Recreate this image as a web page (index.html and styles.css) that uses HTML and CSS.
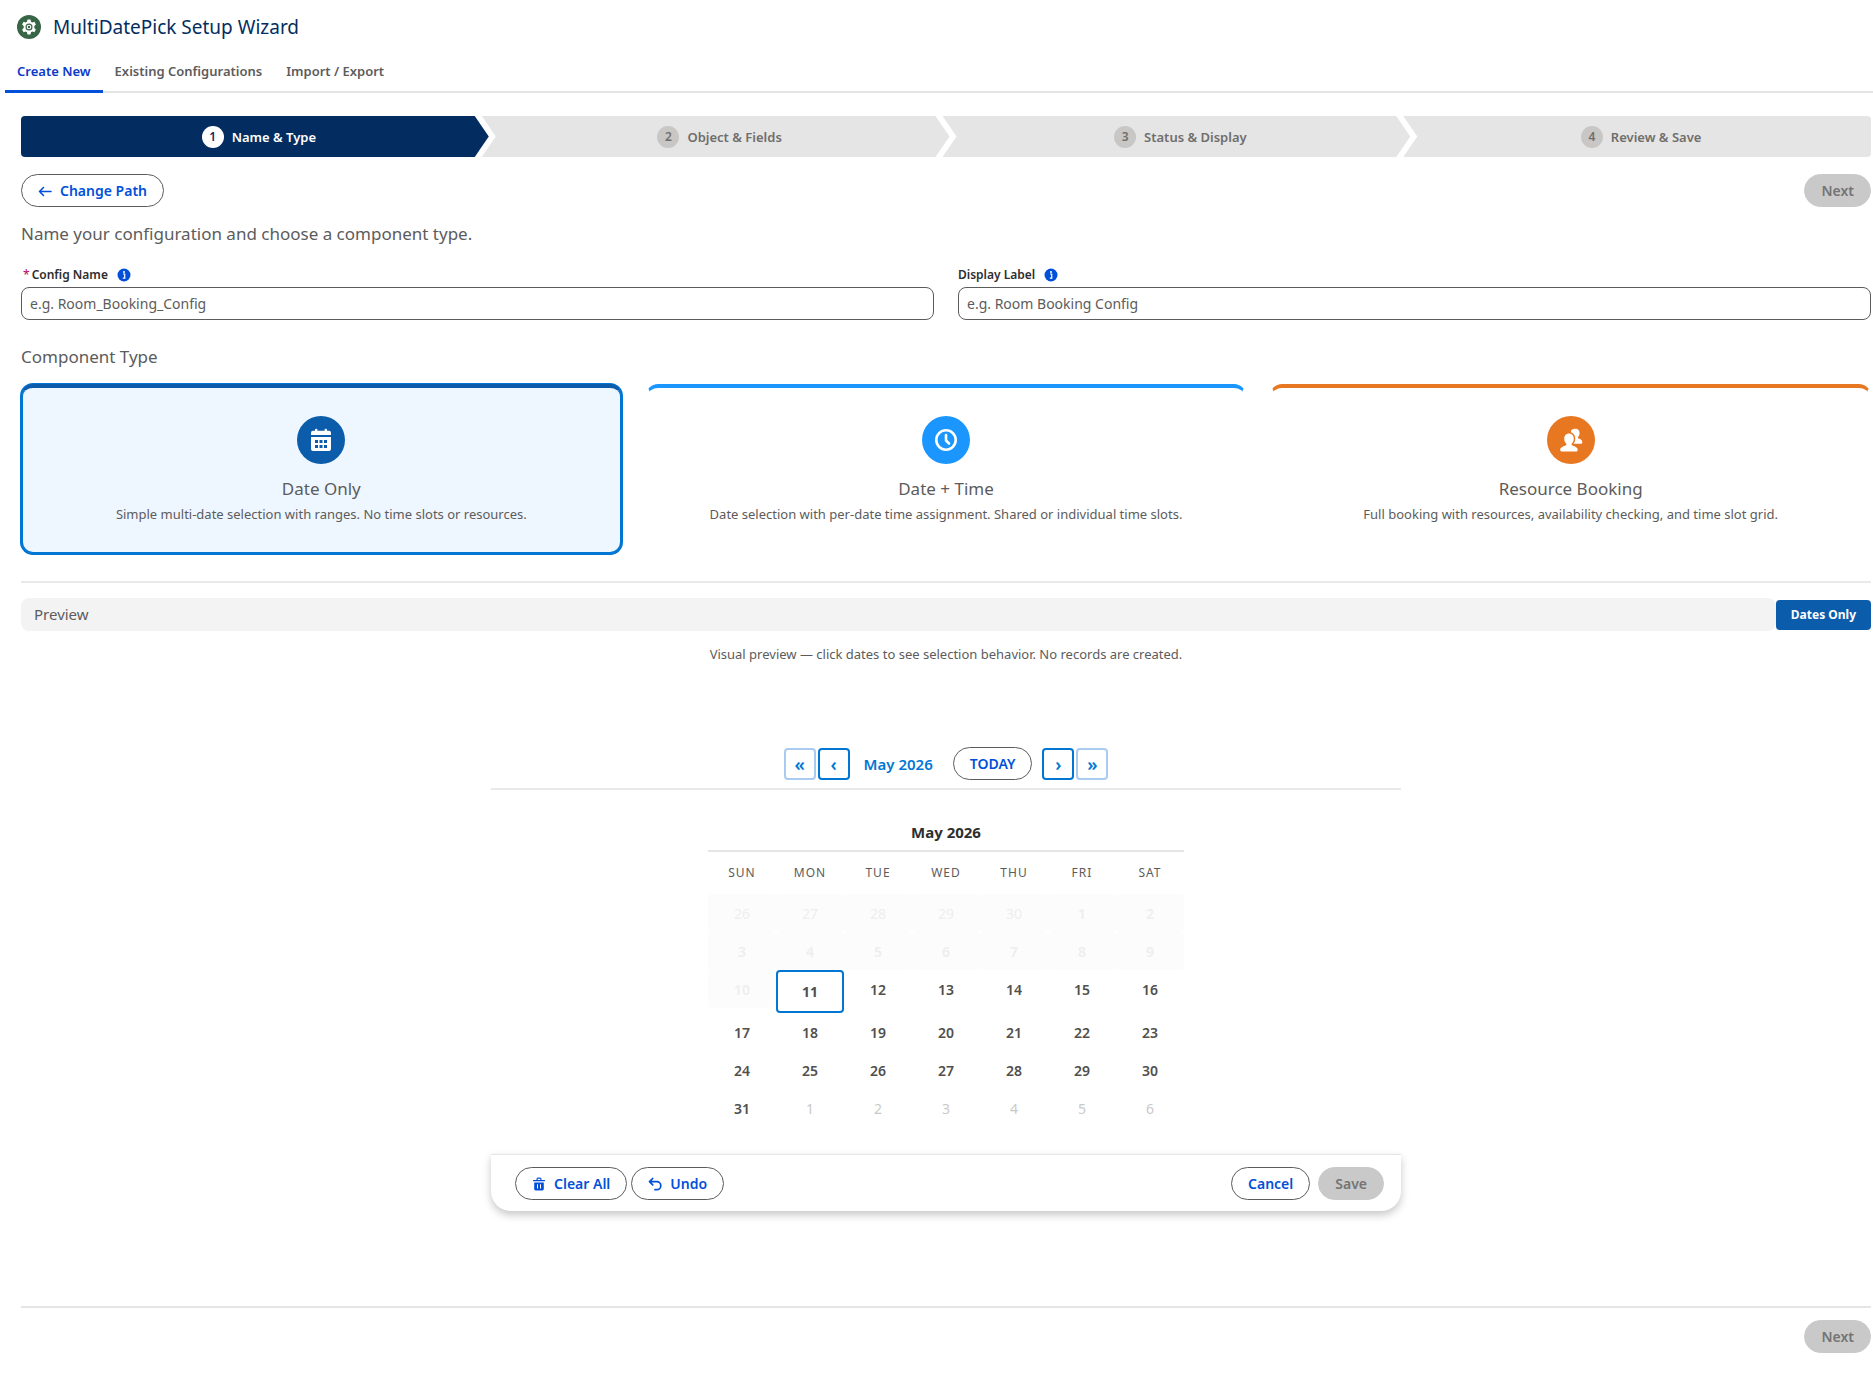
FILE: index.html
```html
<!DOCTYPE html>
<html lang="en">
<head>
<meta charset="utf-8">
<meta name="viewport" content="width=device-width, initial-scale=1">
<title>MultiDatePick Setup Wizard</title>
<link rel="stylesheet" href="styles.css">
</head>
<body>
<header class="app-header">
  <svg class="app-icon" viewBox="0 0 24 24" aria-hidden="true">
    <circle cx="12" cy="12" r="12" fill="#396547"/>
    <path d="M10.5 4.6h3l.5 2.1 1.3.8 2.1-.7 1.5 2.6-1.6 1.5v2.2l1.6 1.5-1.5 2.6-2.1-.7-1.3.8-.5 2.1h-3l-.5-2.1-1.3-.8-2.1.7-1.5-2.6 1.6-1.500v-2.200L5.100 9.400l1.500-2.600 2.100.7 1.300-.8z" fill="#fff"/>
    <circle cx="12" cy="12" r="3.500" fill="#396547"/>
    <circle cx="12" cy="12" r="2.300" fill="#fff"/>
    <circle cx="12" cy="12" r="1.200" fill="#396547"/>
  </svg>
  <h1 class="app-title">MultiDatePick Setup Wizard</h1>
</header>

<nav class="tabs" aria-label="Wizard sections">
  <a class="tab tab-active" href="#create" aria-current="page">Create New</a>
  <a class="tab" href="#existing">Existing Configurations</a>
  <a class="tab" href="#transfer">Import / Export</a>
</nav>

<main class="wizard">
  <ol class="steps">
    <li class="step step-current" aria-current="step"><span class="step-number">1</span>Name &amp; Type</li>
    <li class="step"><span class="step-number">2</span>Object &amp; Fields</li>
    <li class="step"><span class="step-number">3</span>Status &amp; Display</li>
    <li class="step"><span class="step-number">4</span>Review &amp; Save</li>
  </ol>

  <div class="step-actions">
    <button class="btn" type="button">
      <svg class="btn-icon" viewBox="0 0 14 14" aria-hidden="true"><path d="M13 7.500H1.500M5.500 3.500l-4 4 4 4" fill="none" stroke="currentColor" stroke-width="1.600" stroke-linecap="round" stroke-linejoin="round"/></svg>
      Change Path
    </button>
    <button class="btn btn-solid" type="button" disabled>Next</button>
  </div>

  <h2 class="section-title">Name your configuration and choose a component type.</h2>

  <div class="fields">
    <div class="field">
      <div class="field-head">
        <label class="field-label" for="config-name"><abbr class="required" title="required">*</abbr>Config Name</label>
        <svg class="info" viewBox="0 0 14 14" role="img" aria-label="Help"><circle cx="7" cy="7" r="6.500" fill="#0250d9"/><path d="M6 6h1.700v4M5.800 10.200h2.600" fill="none" stroke="#fff" stroke-width="1.200"/><circle cx="7" cy="3.900" r="1" fill="#fff"/></svg>
      </div>
      <input class="field-input" id="config-name" type="text" placeholder="e.g. Room_Booking_Config" required>
    </div>
    <div class="field">
      <div class="field-head">
        <label class="field-label" for="display-label">Display Label</label>
        <svg class="info" viewBox="0 0 14 14" role="img" aria-label="Help"><circle cx="7" cy="7" r="6.500" fill="#0250d9"/><path d="M6 6h1.700v4M5.800 10.200h2.600" fill="none" stroke="#fff" stroke-width="1.200"/><circle cx="7" cy="3.900" r="1" fill="#fff"/></svg>
      </div>
      <input class="field-input" id="display-label" type="text" placeholder="e.g. Room Booking Config">
    </div>
  </div>

  <fieldset class="types">
    <legend class="section-title">Component Type</legend>
    <div class="type-grid">
      <label class="type type-date">
        <input class="type-radio" type="radio" name="component-type" checked>
        <svg class="type-icon" viewBox="0 0 48 48" aria-hidden="true">
          <circle cx="24" cy="24" r="24" fill="#0b5cab"/>
          <path d="M14 19v-2.200a2 2 0 0 1 2-2h2V14a1.200 1.200 0 0 1 2.400 0v.8h7.200V14a1.200 1.200 0 0 1 2.400 0v.8h2a2 2 0 0 1 2 2V19z" fill="#fff"/>
          <path fill-rule="evenodd" d="M14 21h20v12a2 2 0 0 1-2 2H16a2 2 0 0 1-2-2zM18 24v3h3v-3zM22.500 24v3h3v-3zM27 24v3h3v-3zM18 29v3h3v-3zM22.500 29v3h3v-3zM27 29v3h3v-3z" fill="#fff"/>
        </svg>
        <span class="type-name">Date Only</span>
        <span class="type-text">Simple multi-date selection with ranges. No time slots or resources.</span>
      </label>
      <label class="type type-time">
        <input class="type-radio" type="radio" name="component-type">
        <svg class="type-icon" viewBox="0 0 48 48" aria-hidden="true">
          <circle cx="24" cy="24" r="24" fill="#1b96ff"/>
          <circle cx="24" cy="24" r="9.700" fill="none" stroke="#fff" stroke-width="2.600"/>
          <path d="M24 19v5.500l3 3" fill="none" stroke="#fff" stroke-width="2.600" stroke-linecap="round" stroke-linejoin="round"/>
        </svg>
        <span class="type-name">Date + Time</span>
        <span class="type-text">Date selection with per-date time assignment. Shared or individual time slots.</span>
      </label>
      <label class="type type-resource">
        <input class="type-radio" type="radio" name="component-type">
        <svg class="type-icon" viewBox="0 0 48 48" aria-hidden="true">
          <circle cx="24" cy="24" r="24" fill="#e87722"/>
          <path d="M28.700 12.700c2.300 0 3.900 1.700 3.900 4.200 0 1.600-.7 3-1.500 3.900-.5.700-.3 1.400.6 1.800 1.900.8 3.600 1.600 3.600 3.700 0 1-.6 1.500-1.500 1.500H24V14.500c.9-1.200 2.600-1.800 4.700-1.800z" fill="#fff"/>
          <path d="M22 17.600c2.900 0 4.800 2.100 4.800 5.100 0 2-.8 3.600-1.900 4.700-.6.800-.3 1.600.7 2 2.600 1 5.100 2 5.100 4.300 0 1.100-.7 1.800-1.700 1.800H15c-1.100 0-1.800-.7-1.800-1.800 0-2.300 2.600-3.300 5.200-4.300 1-.4 1.300-1.200.7-2-1.100-1.100-1.900-2.700-1.900-4.700 0-3 1.900-5.100 4.800-5.100z" fill="#fff" stroke="#e87722" stroke-width="3" paint-order="stroke"/>
        </svg>
        <span class="type-name">Resource Booking</span>
        <span class="type-text">Full booking with resources, availability checking, and time slot grid.</span>
      </label>
    </div>
  </fieldset>

  <section class="preview">
    <div class="preview-head">
      <h2 class="preview-title">Preview</h2>
      <span class="preview-badge">Dates Only</span>
    </div>
    <p class="preview-note">Visual preview — click dates to see selection behavior. No records are created.</p>

    <div class="picker">
      <div class="picker-nav">
        <div class="nav-group">
          <button class="nav-btn nav-far" type="button" aria-label="Previous year">«</button>
          <button class="nav-btn" type="button" aria-label="Previous month">‹</button>
        </div>
        <span class="nav-month">May 2026</span>
        <button class="btn" type="button">TODAY</button>
        <div class="nav-group">
          <button class="nav-btn" type="button" aria-label="Next month">›</button>
          <button class="nav-btn nav-far" type="button" aria-label="Next year">»</button>
        </div>
      </div>

      <table class="calendar">
        <caption class="calendar-title">May 2026</caption>
        <thead>
          <tr><th>SUN</th><th>MON</th><th>TUE</th><th>WED</th><th>THU</th><th>FRI</th><th>SAT</th></tr>
        </thead>
        <tbody>
          <tr>
            <td><button class="day past outside" disabled>26</button></td>
            <td><button class="day past outside" disabled>27</button></td>
            <td><button class="day past outside" disabled>28</button></td>
            <td><button class="day past outside" disabled>29</button></td>
            <td><button class="day past outside" disabled>30</button></td>
            <td><button class="day past" disabled>1</button></td>
            <td><button class="day past" disabled>2</button></td>
          </tr>
          <tr>
            <td><button class="day past" disabled>3</button></td>
            <td><button class="day past" disabled>4</button></td>
            <td><button class="day past" disabled>5</button></td>
            <td><button class="day past" disabled>6</button></td>
            <td><button class="day past" disabled>7</button></td>
            <td><button class="day past" disabled>8</button></td>
            <td><button class="day past" disabled>9</button></td>
          </tr>
          <tr>
            <td><button class="day past" disabled>10</button></td>
            <td><button class="day today" aria-current="date">11</button></td>
            <td><button class="day">12</button></td>
            <td><button class="day">13</button></td>
            <td><button class="day">14</button></td>
            <td><button class="day">15</button></td>
            <td><button class="day">16</button></td>
          </tr>
          <tr>
            <td><button class="day">17</button></td>
            <td><button class="day">18</button></td>
            <td><button class="day">19</button></td>
            <td><button class="day">20</button></td>
            <td><button class="day">21</button></td>
            <td><button class="day">22</button></td>
            <td><button class="day">23</button></td>
          </tr>
          <tr>
            <td><button class="day">24</button></td>
            <td><button class="day">25</button></td>
            <td><button class="day">26</button></td>
            <td><button class="day">27</button></td>
            <td><button class="day">28</button></td>
            <td><button class="day">29</button></td>
            <td><button class="day">30</button></td>
          </tr>
          <tr>
            <td><button class="day">31</button></td>
            <td><button class="day outside">1</button></td>
            <td><button class="day outside">2</button></td>
            <td><button class="day outside">3</button></td>
            <td><button class="day outside">4</button></td>
            <td><button class="day outside">5</button></td>
            <td><button class="day outside">6</button></td>
          </tr>
        </tbody>
      </table>

      <div class="picker-actions">
        <div class="picker-group">
          <button class="btn" type="button">
            <svg class="btn-icon" viewBox="0 0 14 14" aria-hidden="true"><path fill="currentColor" fill-rule="evenodd" d="M1.500 3h3V2a1.500 1.500 0 0 1 1.500-1.500h2A1.500 1.500 0 0 1 9.500 2v1h3a.5.5 0 0 1 .5.5v.8H1v-.8a.5.5 0 0 1 .5-.5zM5.700 3h2.600V1.700H5.700zM2.200 5.500h9.600v6.600a1.400 1.400 0 0 1-1.400 1.400H3.600a1.400 1.400 0 0 1-1.400-1.400zM5 7.300v4.200h1V7.300zM8 7.300v4.200h1V7.300z"/></svg>
            Clear All
          </button>
          <button class="btn" type="button">
            <svg class="btn-icon" viewBox="0 0 14 14" aria-hidden="true"><path d="M4.700 1.500 1.500 4.700l3.200 3.200M1.800 4.700h7a4 4 0 0 1 0 8H7" fill="none" stroke="currentColor" stroke-width="1.700" stroke-linecap="round" stroke-linejoin="round"/></svg>
            Undo
          </button>
        </div>
        <div class="picker-group picker-group-end">
          <button class="btn" type="button">Cancel</button>
          <button class="btn btn-solid" type="button" disabled>Save</button>
        </div>
      </div>
    </div>
  </section>

  <footer class="wizard-footer">
    <button class="btn btn-solid" type="button" disabled>Next</button>
  </footer>
</main>
</body>
</html>
```
FILE: styles.css
```css
* {
  box-sizing: border-box;
}

body {
  margin: 0;
  background: #fff;
  color: #5c5c5c;
  font-family: "Noto Sans", "Open Sans", sans-serif;
  font-size: 13px;
  line-height: 20px;
}

h1,
h2,
p {
  margin: 0;
  font-weight: 400;
}

button,
input {
  font-family: inherit;
}

.app-header {
  display: flex;
  align-items: center;
  gap: 12px;
  padding: 12px 17px;
}

.app-icon {
  width: 24px;
  height: 24px;
}

.app-title {
  color: #032d60;
  font-size: 19px;
  line-height: 30px;
}

.tabs {
  display: flex;
  margin-left: 5px;
  box-shadow: inset 0 -2px #e5e5e5;
}

.tab {
  padding: 7px 12px 9px;
  border-bottom: 3px solid transparent;
  color: #5c5c5c;
  font-weight: 600;
  text-decoration: none;
}

.tab-active {
  border-color: #0250d9;
  color: #0b39c9;
}

.wizard {
  padding: 23px 2px 40px 21px;
}

.steps {
  display: flex;
  margin: 0 0 17px;
  padding: 0;
  overflow: hidden;
  border-radius: 4px;
  list-style: none;
}

.step {
  display: flex;
  flex: 1;
  align-items: center;
  justify-content: center;
  gap: 8px;
  height: 41px;
  padding-left: 8px;
  background: #e5e5e5;
  clip-path: polygon(0 0, calc(100% - 14px) 0, 100% 50%, calc(100% - 14px) 100%, 0 100%, 14px 50%);
  color: #706e6b;
  font-weight: 600;
}

.step + .step {
  margin-left: -7px;
}

.step:first-child {
  clip-path: polygon(0 0, calc(100% - 14px) 0, 100% 50%, calc(100% - 14px) 100%, 0 100%);
}

.step:last-child {
  clip-path: polygon(0 0, 100% 0, 100% 100%, 0 100%, 14px 50%);
}

.step-current {
  background: #032d60;
  color: #fff;
}

.step-number {
  width: 22px;
  border-radius: 50%;
  background: #c9c7c5;
  font-size: 12px;
  line-height: 22px;
  text-align: center;
}

.step-current .step-number {
  background: #fff;
  color: #032d60;
}

.step-actions {
  display: flex;
  justify-content: space-between;
  margin-bottom: 14px;
}

.btn {
  display: inline-flex;
  align-items: center;
  gap: 8px;
  height: 33px;
  padding: 0 16px;
  border: 1px solid #5c5c5c;
  border-radius: 17px;
  background: #fff;
  color: #0250d9;
  font-size: 14px;
  font-weight: 600;
}

.btn-solid {
  border-color: #c9c9c9;
  background: #c9c9c9;
  color: #747474;
}

.btn-icon {
  width: 14px;
  height: 14px;
}

.section-title {
  padding: 0;
  font-size: 17px;
  line-height: 26px;
}

.fields {
  display: grid;
  grid-template-columns: 1fr 1fr;
  gap: 24px;
  margin: 18px 0 24px;
}

.field-head {
  display: flex;
  align-items: center;
  gap: 9px;
  margin-bottom: 2px;
}

.field-label {
  color: #2e2e2e;
  font-size: 12px;
  font-weight: 600;
}

.required {
  margin: 0 2px;
  color: #b60554;
  font-weight: 400;
  text-decoration: none;
}

.info {
  width: 14px;
  height: 14px;
}

.field-input {
  display: block;
  width: 100%;
  height: 33px;
  padding: 0 8px;
  border: 1px solid #5c5c5c;
  border-radius: 8px;
  background: #fff;
  color: #2e2e2e;
  font-size: 14px;
}

.field-input::placeholder {
  color: #5c5c5c;
  opacity: 1;
}

.types {
  min-width: 0;
  margin: 0;
  padding: 0;
  border: 0;
}

.type-grid {
  display: grid;
  grid-template-columns: repeat(3, 1fr);
  gap: 24px;
  margin-top: 14px;
}

.type {
  display: flex;
  flex-direction: column;
  align-items: center;
  padding: 28px 20px 26px;
  border: 2px solid transparent;
  border-top-width: 4px;
  border-radius: 12px;
  text-align: center;
}

.type-radio {
  position: absolute;
  opacity: 0;
}

.type:has(:checked) {
  border-color: #0176d3;
  background: #eef6ff;
  box-shadow: 0 0 0 1px #0176d3;
}

.type.type-date {
  border-top-color: #0b5cab;
}

.type.type-time {
  border-top-color: #1b96ff;
}

.type.type-resource {
  border-top-color: #e87722;
}

.type-icon {
  width: 48px;
  height: 48px;
  margin-bottom: 12px;
}

.type-name {
  font-size: 17px;
  line-height: 26px;
}

.type-text {
  line-height: 24px;
}

.preview {
  margin-top: 27px;
  padding-top: 15px;
  border-top: 2px solid #e9e9e9;
}

.preview-head {
  display: flex;
  align-items: center;
}

.preview-title {
  flex: 1;
  padding: 0 13px;
  border-radius: 8px;
  background: #f3f3f3;
  font-size: 15px;
  line-height: 33px;
}

.preview-badge {
  padding: 0 15px;
  border-radius: 4px;
  background: #0b5cab;
  color: #fff;
  font-size: 12px;
  font-weight: 700;
  line-height: 30px;
}

.preview-note {
  margin: 13px 0 83px;
  text-align: center;
}

.picker {
  max-width: 910px;
  margin: 0 auto;
}

.picker-nav {
  display: flex;
  align-items: center;
  justify-content: center;
  padding-bottom: 8px;
  border-bottom: 2px solid #e9e9e9;
}

.picker-nav .btn {
  margin: 0 10px 0 20px;
}

.nav-group {
  display: flex;
  gap: 2px;
}

.nav-btn {
  width: 32px;
  height: 32px;
  padding: 0;
  border: 2px solid #0176d3;
  border-radius: 4px;
  background: #fff;
  color: #0176d3;
  font-size: 18px;
  font-weight: 600;
  line-height: 28px;
}

.nav-far {
  border-color: #aacbf0;
}

.nav-month {
  margin-left: 14px;
  color: #0176d3;
  font-size: 15px;
  font-weight: 600;
}

.calendar {
  width: 476px;
  margin: 29px auto 27px;
  border-spacing: 0;
  table-layout: fixed;
}

.calendar-title {
  padding-bottom: 5px;
  border-bottom: 2px solid #e5e5e5;
  color: #2e2e2e;
  font-size: 15px;
  font-weight: 700;
  line-height: 26px;
}

.calendar th {
  height: 42px;
  padding: 0;
  font-size: 12px;
  font-weight: 400;
  letter-spacing: 1px;
}

.calendar td {
  padding: 0;
  vertical-align: top;
}

.day {
  display: block;
  width: 100%;
  height: 38px;
  padding: 0;
  border: 0;
  border-radius: 4px;
  background: none;
  color: #514f4d;
  font-size: 14px;
  font-weight: 600;
}

.today {
  height: 43px;
  border: 2px solid #0176d3;
  font-weight: 700;
}

.outside {
  color: #c9c9c9;
  font-weight: 400;
}

.past {
  background: #fcfcfc;
  color: #eee;
}

.picker-actions {
  display: flex;
  justify-content: space-between;
  padding: 12px 17px 11px 24px;
  border-top: 1px solid #e5e5e5;
  border-radius: 0 0 20px 20px;
  box-shadow: 0 4px 8px rgba(0, 0, 0, 0.22);
}

.picker-group {
  display: flex;
  gap: 4px;
}

.picker-group-end {
  gap: 8px;
}

.wizard-footer {
  display: flex;
  justify-content: flex-end;
  margin-top: 95px;
  padding-top: 12px;
  border-top: 2px solid #e5e5e5;
}
```
